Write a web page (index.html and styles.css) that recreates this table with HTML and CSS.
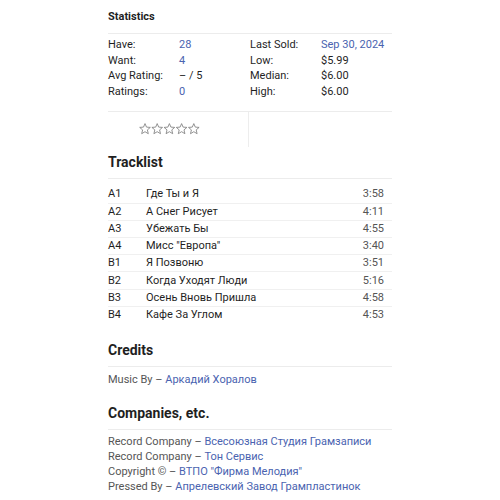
FILE: index.html
```html
<!DOCTYPE html>
<html>
<head>
<meta charset="utf-8">
<link rel="stylesheet" href="styles.css">
</head>
<body>
<div class="page">
  <section class="stats">
    <h3 class="stats-title">Statistics</h3>
    <div class="stats-grid">
      <div class="stats-col">
        <div class="stat"><span class="lbl">Have:</span><a class="val link">28</a></div>
        <div class="stat"><span class="lbl">Want:</span><a class="val link">4</a></div>
        <div class="stat"><span class="lbl">Avg Rating:</span><span class="val">– / 5</span></div>
        <div class="stat"><span class="lbl">Ratings:</span><a class="val link">0</a></div>
      </div>
      <div class="stats-col">
        <div class="stat"><span class="lbl">Last Sold:</span><a class="val link">Sep 30, 2024</a></div>
        <div class="stat"><span class="lbl">Low:</span><span class="val">$5.99</span></div>
        <div class="stat"><span class="lbl">Median:</span><span class="val">$6.00</span></div>
        <div class="stat"><span class="lbl">High:</span><span class="val">$6.00</span></div>
      </div>
    </div>
    <div class="rating-row">
      <div class="stars">
        <svg width="61" height="12" viewBox="0 0 61 12">
          <g fill="none" stroke="#808080" stroke-width="0.85" stroke-linejoin="round">
            <path d="M6 0.6 L7.5 4.1 L11.3 4.4 L8.4 6.9 L9.3 10.7 L6 8.7 L2.7 10.7 L3.6 6.9 L0.7 4.4 L4.5 4.1 Z"/>
            <path transform="translate(12.2 0)" d="M6 0.6 L7.5 4.1 L11.3 4.4 L8.4 6.9 L9.3 10.7 L6 8.7 L2.7 10.7 L3.6 6.9 L0.7 4.4 L4.5 4.1 Z"/>
            <path transform="translate(24.4 0)" d="M6 0.6 L7.5 4.1 L11.3 4.4 L8.4 6.9 L9.3 10.7 L6 8.7 L2.7 10.7 L3.6 6.9 L0.7 4.4 L4.5 4.1 Z"/>
            <path transform="translate(36.6 0)" d="M6 0.6 L7.5 4.1 L11.3 4.4 L8.4 6.9 L9.3 10.7 L6 8.7 L2.7 10.7 L3.6 6.9 L0.7 4.4 L4.5 4.1 Z"/>
            <path transform="translate(48.8 0)" d="M6 0.6 L7.5 4.1 L11.3 4.4 L8.4 6.9 L9.3 10.7 L6 8.7 L2.7 10.7 L3.6 6.9 L0.7 4.4 L4.5 4.1 Z"/>
          </g>
        </svg>
      </div>
      <div class="rating-empty"></div>
    </div>
  </section>

  <section class="tracklist">
    <h2 class="heading">Tracklist</h2>
    <table class="tracks">
      <tr><td class="pos">A1</td><td class="title">Где Ты и Я</td><td class="dur">3:58</td></tr>
      <tr><td class="pos">A2</td><td class="title">А Снег Рисует</td><td class="dur">4:11</td></tr>
      <tr><td class="pos">A3</td><td class="title">Убежать Бы</td><td class="dur">4:55</td></tr>
      <tr><td class="pos">A4</td><td class="title">Мисс "Европа"</td><td class="dur">3:40</td></tr>
      <tr><td class="pos">B1</td><td class="title">Я Позвоню</td><td class="dur">3:51</td></tr>
      <tr><td class="pos">B2</td><td class="title">Когда Уходят Люди</td><td class="dur">5:16</td></tr>
      <tr><td class="pos">B3</td><td class="title">Осень Вновь Пришла</td><td class="dur">4:58</td></tr>
      <tr><td class="pos">B4</td><td class="title">Кафе За Углом</td><td class="dur">4:53</td></tr>
    </table>
  </section>

  <section class="credits">
    <h2 class="heading">Credits</h2>
    <ul class="list">
      <li><span class="role">Music By</span> – <a class="link">Аркадий Хоралов</a></li>
    </ul>
  </section>

  <section class="companies">
    <h2 class="heading">Companies, etc.</h2>
    <ul class="list list-tight">
      <li><span class="role">Record Company</span> – <a class="link">Всесоюзная Студия Грамзаписи</a></li>
      <li><span class="role">Record Company</span> – <a class="link">Тон Сервис</a></li>
      <li><span class="role">Copyright ©</span> – <a class="link">ВТПО "Фирма Мелодия"</a></li>
      <li><span class="role">Pressed By</span> – <a class="link">Апрелевский Завод Грампластинок</a></li>
    </ul>
  </section>
</div>
</body>
</html>
```

FILE: styles.css
```css
* { box-sizing: border-box; }
body {
  margin: 0;
  background: #fff;
  font-family: Roboto, "Noto Sans", sans-serif;
  color: #1f1f1f;
  font-size: 11px;
}
.page {
  width: 284px;
  margin-left: 108px;
  padding-top: 10px;
}
.link { color: #4a63b0; text-decoration: none; }

.stats-title {
  margin: 0;
  font-size: 11px;
  font-weight: 700;
  line-height: 14px;
  padding-bottom: 9px;
  border-bottom: 1px solid #ececec;
}
.stats-grid {
  display: grid;
  grid-template-columns: 142px 142px;
  padding: 3px 0 12px;
  border-bottom: 1px solid #ececec;
}
.stat {
  display: flex;
  line-height: 15.5px;
}
.lbl { width: 71px; flex: none; }
.rating-row {
  display: grid;
  grid-template-columns: 141px 143px;
  height: 35px;
}
.stars {
  border-right: 1px solid #ededed;
  display: flex;
  justify-content: flex-start;
  padding-top: 11px;
  padding-left: 31px;
}
.heading {
  margin: 0;
  font-size: 14px;
  font-weight: 700;
  line-height: 18px;
  padding: 6px 0 7px;
  border-bottom: 1px solid #ececec;
}
.tracks {
  width: 100%;
  border-collapse: collapse;
  margin-top: 7px;
}
.tracks td {
  height: 17.2px;
  padding: 0;
  border-bottom: 1px solid #f0f0f0;
  line-height: 16px;
}
.tracks tr:last-child td { border-bottom: none; }
.pos { width: 38px; }
.dur { text-align: right; color: #555; padding-right: 8px !important; }
.credits { margin-top: 11px; }
.companies { margin-top: 11px; }
.list {
  list-style: none;
  margin: 0;
  padding: 5px 0 0;
}
.list-tight { padding-top: 4px; }
.list li { line-height: 15px; color: #555; }
.role { color: #555; }
```
